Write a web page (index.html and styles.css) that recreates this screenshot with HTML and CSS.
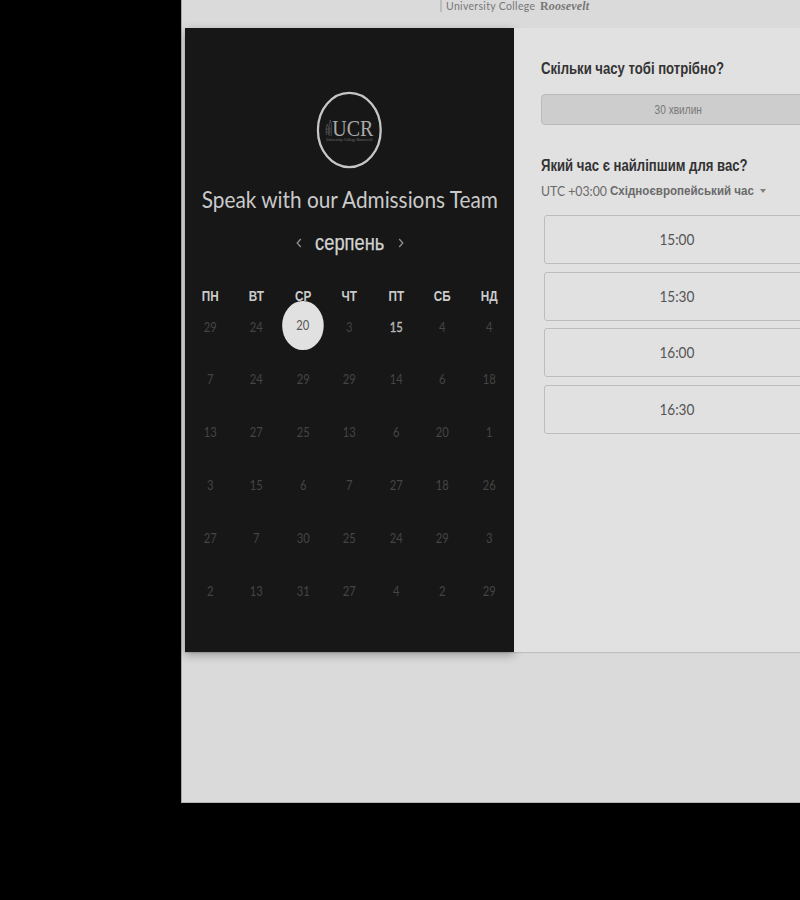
FILE: index.html
```html
<!DOCTYPE html>
<html lang="uk">
<head>
<meta charset="utf-8">
<title>Speak with our Admissions Team</title>
<link rel="stylesheet" href="styles.css">
</head>
<body>
<div class="page">
  <header class="brand">
    <svg width="160" height="16" viewBox="0 0 160 16">
      <path d="M1 0V12" stroke="#a0a0a0"/>
      <text class="brand-sans" x="6" y="10" textLength="89">University College</text>
      <text class="brand-serif" x="100" y="10" textLength="49"><tspan class="upright">R</tspan>oosevelt</text>
    </svg>
  </header>
  <main class="card">
    <section class="calendar">
      <svg class="logo" width="66" height="78" viewBox="0 0 66 78">
        <ellipse cx="33" cy="39" rx="31.4" ry="37.2" fill="none" stroke="#c6c6c6" stroke-width="2.3"/>
        <path d="M10 44v-8l1-3 1 3v8M13 45V33l1-4 1 4v12M9 38h6M9 41h6" fill="none" stroke="#505050" stroke-width=".8"/>
        <text class="logo-name" x="16" y="45" textLength="41" lengthAdjust="spacingAndGlyphs">UCR</text>
        <text class="logo-sub" x="10" y="50" textLength="46" lengthAdjust="spacingAndGlyphs">University College Roosevelt</text>
      </svg>
      <h1 class="title"><span>Speak with our Admissions Team</span></h1>
      <div class="month">
        <svg width="6" height="10" viewBox="0 0 6 10"><path d="M4.8 1L1.2 5l3.6 4"/></svg>
        <span class="month-name"><span>серпень</span></span>
        <svg width="6" height="10" viewBox="0 0 6 10"><path d="M1.2 1l3.6 4-3.6 4"/></svg>
      </div>
      <div class="week names"><b>ПН</b><b>ВТ</b><b>СР</b><b>ЧТ</b><b>ПТ</b><b>СБ</b><b>НД</b></div>
      <div class="days">
        <div class="week"><i>29</i><i>24</i><i class="selected"><span>20</span></i><i>3</i><i class="open">15</i><i>4</i><i>4</i></div>
        <div class="week"><i>7</i><i>24</i><i>29</i><i>29</i><i>14</i><i>6</i><i>18</i></div>
        <div class="week"><i>13</i><i>27</i><i>25</i><i>13</i><i>6</i><i>20</i><i>1</i></div>
        <div class="week"><i>3</i><i>15</i><i>6</i><i>7</i><i>27</i><i>18</i><i>26</i></div>
        <div class="week"><i>27</i><i>7</i><i>30</i><i>25</i><i>24</i><i>29</i><i>3</i></div>
        <div class="week"><i>2</i><i>13</i><i>31</i><i>27</i><i>4</i><i>2</i><i>29</i></div>
      </div>
    </section>
    <section class="booking">
      <h2 class="q1"><span>Скільки часу тобі потрібно?</span></h2>
      <div class="duration"><span>30 хвилин</span></div>
      <h2 class="q2"><span>Який час є найліпшим для вас?</span></h2>
      <div class="zone"><span class="utc">UTC +03:00</span><span class="zone-name"><span>Східноєвропейський час</span></span><span class="caret"></span></div>
      <div class="slots">
        <div class="slot"><span>15:00</span></div>
        <div class="slot"><span>15:30</span></div>
        <div class="slot"><span>16:00</span></div>
        <div class="slot"><span>16:30</span></div>
      </div>
    </section>
  </main>
</div>
</body>
</html>
```
FILE: styles.css
```css
* { box-sizing: border-box; }
body { margin: 0; height: 900px; background: #000; overflow: hidden; font-family: "Liberation Sans", sans-serif; }
svg { display: block; flex: none; }
span { white-space: nowrap; }
.page { margin-left: 181px; width: 640px; height: 803px; background: #dadada; border-left: 1px solid #a8a8a8; border-bottom: 1px solid #b4b4b4; }
.brand { height: 28px; padding-left: 258px; }
.brand-sans { font: 10.5px Lato, sans-serif; fill: #777; }
.brand-serif { font: italic bold 12px "Liberation Serif", serif; fill: #777; }
.upright { font-style: normal; }
.card { display: flex; margin-left: 3px; width: 640px; height: 624px; box-shadow: 0 1px 1px rgba(0,0,0,.12); }
.calendar { width: 329px; height: 624px; background: #171717; box-shadow: 0 3px 9px rgba(0,0,0,.3); padding-top: 63px; flex: none; font-family: Lato, sans-serif; }
.logo { margin: 0 auto; transform: translateX(-.7px); }
.logo-name { font: 24px "Liberation Serif", serif; fill: #a9a9a9; }
.logo-sub { font: 4px "Liberation Serif", serif; fill: #777; }
.title { margin: 15px 0 0; height: 30px; line-height: 30px; font-size: 23px; font-weight: 400; color: #cacaca; display: flex; justify-content: center; }
.title span { transform: scaleX(.904); }
.month { display: flex; height: 30px; margin-top: 14px; align-items: center; justify-content: center; gap: 13px; }
.month svg { fill: none; stroke: #8f8f8f; stroke-width: 1.3; }
.month-name { width: 70px; display: flex; justify-content: center; font: 21.5px/30px "Liberation Sans", sans-serif; color: #d3d3d3; -webkit-text-stroke: .25px #d3d3d3; }
.month-name span { transform: scaleX(.85); }
.week { display: grid; grid-template-columns: repeat(7, 46.55px); padding-left: 1.7px; text-align: center; height: 52.85px; line-height: 20px; }
.names { height: 20px; margin-top: 28px; }
.names b { font: bold 14px/20px "Liberation Sans", sans-serif; color: #cacaca; transform: scaleX(.84); }
.days { margin-top: 10.5px; }
.week i { font-style: normal; font-size: 14px; color: #454545; transform: scaleX(.8); }
.week i.open { color: #b8b8b8; -webkit-text-stroke: .4px #b8b8b8; }
.week i.selected { justify-self: center; width: 51.5px; height: 49px; margin-top: -16px; border-radius: 50%; background: #e1e1e1; color: #555; line-height: 47px; }
.booking { position: relative; padding-left: 26.5px; width: 311px; flex: none; background: #e1e1e1; }
h2 { margin: 0; height: 20px; font-size: 16px; line-height: 20px; color: #333; }
h2 span { display: inline-block; transform-origin: left; }
.q1 { margin-top: 31px; }
.q1 span { transform: scaleX(.82); }
.duration { margin-top: 15px; width: 276px; height: 31px; border: 1px solid #bababa; border-radius: 4px; background: #cdcdcd; color: #777; font-size: 12.5px; line-height: 30px; display: flex; justify-content: center; }
.duration span { transform: scaleX(.81); }
.q2 { margin-top: 31px; }
.q2 span { transform: scaleX(.82); }
.zone { display: flex; align-items: center; height: 20px; margin-top: 5px; font-size: 13px; line-height: 20px; color: #6a6a6a; }
.utc { width: 69px; font: 13.5px/20px Lato, sans-serif; transform: scaleX(.91); transform-origin: left; }
.zone-name { width: 150px; }
.zone-name span { display: inline-block; font-weight: bold; transform: scaleX(.89); transform-origin: left; }
.caret { border: 3.5px solid transparent; border-top: 4px solid #808080; border-bottom: 0; }
.slots { display: flex; flex-direction: column; gap: 7.6px; margin: 14px 0 0 3px; }
.slot { width: 267px; height: 49px; border: 1px solid #bdbdbd; border-radius: 3px; display: flex; justify-content: center; line-height: 46px; font-family: Lato, sans-serif; font-size: 15.5px; color: #555; }
.slot span { transform: scaleX(.88); }
```
